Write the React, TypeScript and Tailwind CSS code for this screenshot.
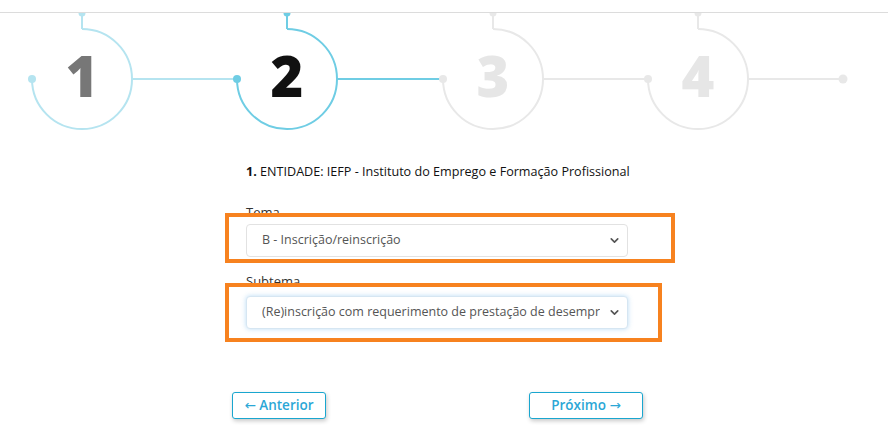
import { ChevronDown } from 'lucide-react'

type Step = { n: number; cx: number; line: string; num: string }

const steps: Step[] = [
  { n: 1, cx: 82, line: '#b5e4f0', num: '#777777' },
  { n: 2, cx: 287, line: '#6fcde4', num: '#111111' },
  { n: 3, cx: 493, line: '#e8e8e8', num: '#e6e6e6' },
  { n: 4, cx: 698, line: '#e8e8e8', num: '#e6e6e6' },
]

function Stepper() {
  return (
    <svg width={888} height={127} className="block">
      <g transform="translate(0,-13)" fill="none" strokeWidth={2}>
        {steps.map((s, i) => {
          const next = i < steps.length - 1 ? steps[i + 1].cx - 50 : 843
          return (
            <g key={s.n}>
              <circle cx={s.cx} cy={13} r={3.5} fill={s.line} stroke="none" />
              <path d={`M${s.cx} 13 V29`} stroke={s.line} />
              <path d={`M${s.cx - 50} 79 A50 50 0 1 0 ${s.cx} 29`} stroke={s.line} />
              <circle cx={s.cx - 50} cy={79} r={4} fill={s.line} stroke="none" />
              <path d={`M${s.cx + 50} 79 H${next}`} stroke={s.line} />
              {i === steps.length - 1 && (
                <circle cx={843} cy={79} r={4.5} fill={s.line} stroke="none" />
              )}
              <text
                x={s.cx}
                y={97}
                textAnchor="middle"
                fill={s.num}
                stroke="none"
                style={{ fontFamily: '"Open Sans", sans-serif', fontWeight: 800, fontSize: 56 }}
              >
                {s.n}
              </text>
            </g>
          )
        })}
      </g>
    </svg>
  )
}

function Select({ value, focused }: { value: string; focused?: boolean }) {
  return (
    <div
      className={`flex h-[33px] w-[382px] items-center rounded-[4px] border bg-white pl-[15px] pr-[6px] text-[12.5px] text-[#555] ${
        focused
          ? 'border-[#d6e6f2] shadow-[0_0_5px_rgba(102,175,233,0.45)]'
          : 'border-[#e2e2e2]'
      }`}
    >
      <span className="w-[338px] overflow-hidden whitespace-nowrap">{value}</span>
      <ChevronDown size={13} strokeWidth={3} className="ml-auto shrink-0 text-[#555]" />
    </div>
  )
}

const arrow = { fontFamily: '"DejaVu Sans", sans-serif', fontWeight: 400 }

export default function App() {
  return (
    <div
      className="relative h-[427px] w-[888px] overflow-hidden bg-white"
      style={{ fontFamily: '"Open Sans", sans-serif' }}
    >
      <div className="h-[12px]" />
      <div className="border-t border-[#dcdcdc]" />
      <Stepper />

      <div className="ml-[246px] w-[390px] pt-[23px]">
        <p className="text-[12.6px] leading-[18px] text-[#111]">
          <b className="font-bold">1.</b> ENTIDADE: IEFP - Instituto do Emprego e Formação Profissional
        </p>

        <label className="mt-[22px] block text-[13px] leading-[18px] text-[#333]">Tema</label>
        <div className="mt-[3px]">
          <Select value="B - Inscrição/reinscrição" />
        </div>

        <label className="mt-[15px] block text-[13px] leading-[18px] text-[#333]">Subtema</label>
        <div className="mt-[6px]">
          <Select value="(Re)inscrição com requerimento de prestação de desemprego" focused />
        </div>
      </div>

      <div className="ml-[232px] mt-[63px] flex w-[411px] justify-between">
        <button className="h-[27px] w-[94px] rounded-[3px] border-[1.5px] border-[#19a6cf] bg-white text-[13.5px] font-semibold text-[#2ba7d6] shadow-[1px_2px_4px_rgba(0,0,0,0.22)]">
          <span style={arrow}>←</span> Anterior
        </button>
        <button className="h-[27px] w-[114px] rounded-[3px] border-[1.5px] border-[#19a6cf] bg-white text-[13.5px] font-semibold text-[#2ba7d6] shadow-[1px_2px_4px_rgba(0,0,0,0.22)]">
          Próximo <span style={arrow}>→</span>
        </button>
      </div>

      <div className="absolute left-[225px] top-[213px] h-[50px] w-[450px] border-[4px] border-[#f7821f]" />
      <div className="absolute left-[225px] top-[283px] h-[59px] w-[437px] border-[4px] border-[#f7821f]" />
    </div>
  )
}
